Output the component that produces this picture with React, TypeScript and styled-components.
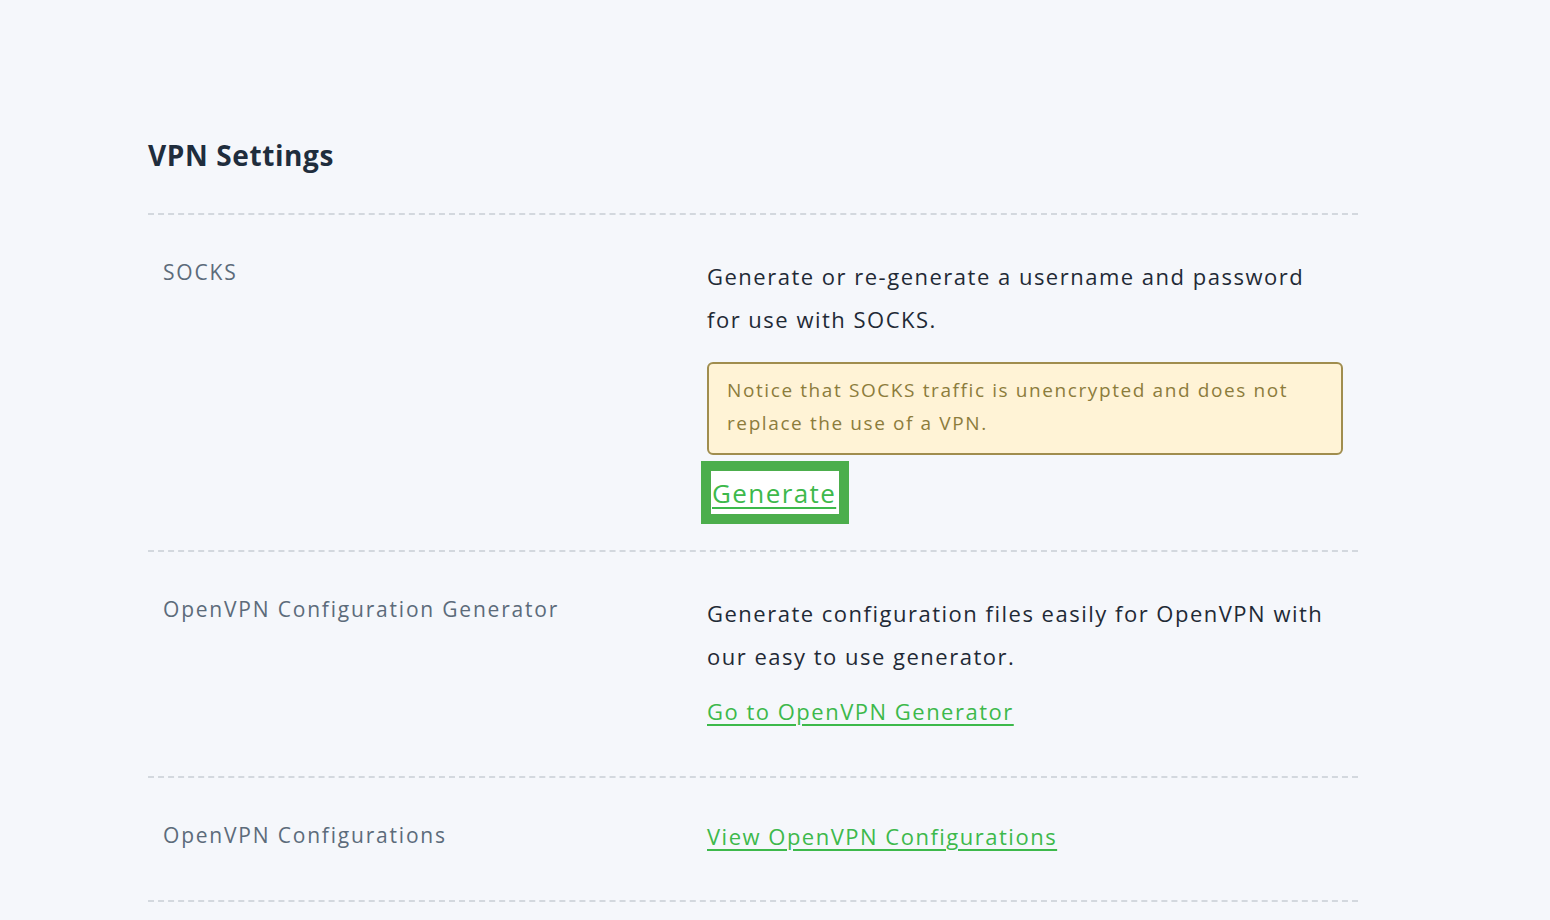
import React from 'react';
import styled, { createGlobalStyle } from 'styled-components';

const GlobalStyle = createGlobalStyle`
  html, body {
    margin: 0;
    padding: 0;
    background: #f5f7fb;
  }
  body {
    font-family: 'Open Sans', 'Noto Sans', sans-serif;
    color: #1f2a36;
  }
`;

const Page = styled.div`
  padding: 130px 192px 0 148px;
`;

const Title = styled.h1`
  margin: 0;
  font-size: 28px;
  line-height: 50px;
  font-weight: 700;
  color: #1f2d3d;
  letter-spacing: 0.6px;
`;

const List = styled.div`
  margin-top: 33px;
  border-top: 2px dashed #d3d8de;
`;

const Row = styled.div<{ $bottom?: number }>`
  display: grid;
  grid-template-columns: 559px 1fr;
  padding: 42px 15px ${({ $bottom }) => $bottom ?? 48}px 0;
  border-bottom: 2px dashed #d3d8de;
`;

const Label = styled.div`
  padding-left: 15px;
  font-size: 21px;
  line-height: 30px;
  color: #5c6b7a;
  letter-spacing: 1.8px;
`;

const Content = styled.div`
  margin-top: -2px;
  display: flex;
  flex-direction: column;
  align-items: flex-start;
`;

const Text = styled.p`
  margin: 0;
  font-size: 22px;
  line-height: 43px;
  color: #1f2a36;
  letter-spacing: 1.5px;
`;

const Notice = styled.div`
  box-sizing: border-box;
  align-self: stretch;
  margin-top: 21px;
  padding: 10px 18px 13px;
  background: #fff3d6;
  border: 2px solid #a08d4e;
  border-radius: 6px;
  font-size: 19px;
  line-height: 33px;
  color: #8c7c3c;
  letter-spacing: 1.6px;
`;

const GenerateButton = styled.button`
  margin: 16px 0 0 4px;
  padding: 0 3px 0 1px;
  height: 43px;
  background: #fff;
  border: none;
  outline: 10px solid #4cae4c;
  font-family: inherit;
  font-size: 26px;
  line-height: 40px;
  color: #3db94b;
  letter-spacing: 1.4px;
  text-decoration: underline;
  text-underline-offset: 4px;
  text-decoration-thickness: 2px;
  cursor: pointer;
`;

const TextLink = styled.a<{ $top?: number }>`
  margin-top: ${({ $top }) => $top ?? 0}px;
  font-size: 22px;
  line-height: 33px;
  color: #3db94b;
  text-decoration: underline;
  text-underline-offset: 4px;
  text-decoration-thickness: 2px;
  letter-spacing: 1.5px;
`;

export default function App() {
  return (
    <>
      <GlobalStyle />
      <Page>
        <Title>VPN Settings</Title>
        <List>
          <Row $bottom={36}>
            <Label>SOCKS</Label>
            <Content>
              <Text>
                Generate or re-generate a username and password for use with SOCKS.
              </Text>
              <Notice>
                Notice that SOCKS traffic is unencrypted and does not replace the use of a VPN.
              </Notice>
              <GenerateButton>Generate</GenerateButton>
            </Content>
          </Row>
          <Row>
            <Label>OpenVPN Configuration Generator</Label>
            <Content>
              <Text>
                Generate configuration files easily for OpenVPN with our easy to use generator.
              </Text>
              <TextLink href="#" $top={17}>
                Go to OpenVPN Generator
              </TextLink>
            </Content>
          </Row>
          <Row $bottom={47}>
            <Label>OpenVPN Configurations</Label>
            <Content>
              <TextLink href="#" $top={2}>
                View OpenVPN Configurations
              </TextLink>
            </Content>
          </Row>
        </List>
      </Page>
    </>
  );
}
